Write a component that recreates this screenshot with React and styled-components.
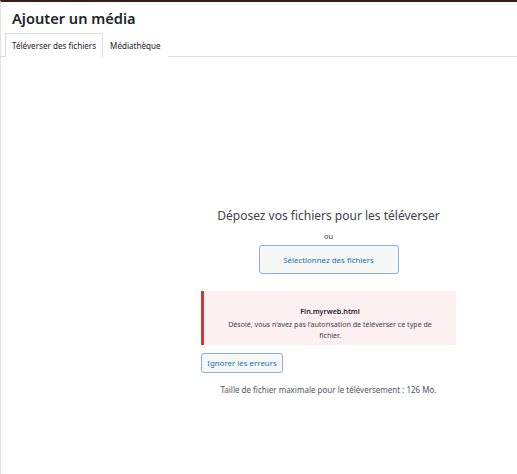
import React from "react";
import styled, { createGlobalStyle } from "styled-components";

const Global = createGlobalStyle`
  html, body { margin: 0; padding: 0; background: #fff; }
  body { font-family: "Noto Sans", "Open Sans", sans-serif; color: #3c434a; }
  * { box-sizing: border-box; }
`;

const Frame = styled.div`
  width: 517px;
  height: 474px;
  border-top: 2px solid #3b1c16;
  border-left: 1px solid #e2e2e4;
  overflow: hidden;
  display: flex;
  flex-direction: column;
  background: #fff;
`;

const Title = styled.h1`
  margin: 6px 0 0 11px;
  font-size: 14.6px;
  line-height: 20px;
  font-weight: 600;
  color: #1d2327;
`;

const TabBar = styled.div`
  display: flex;
  margin-top: 5px;
  padding: 0 4px;
  border-bottom: 1px solid #dcdcde;
  height: 24px;
`;

const Tab = styled.div`
  display: flex;
  align-items: center;
  height: 24px;
  padding: 0 6px;
  font-size: 8.1px;
  color: #1d2327;
  background: #fff;
  border: 1px solid ${(p) => (p.$active ? "#dcdcde" : "transparent")};
  border-bottom: none;
  margin-bottom: -1px;
`;

const Content = styled.div`
  flex: 1;
  display: flex;
  flex-direction: column;
  align-items: center;
  padding-left: 139px;
`;

const DropTitle = styled.h2`
  margin: 150px 0 0;
  font-size: 12px;
  line-height: 18px;
  font-weight: 400;
  color: #3c434a;
`;

const Or = styled.p`
  margin: 5px 0 0;
  font-size: 7.5px;
  line-height: 12px;
  color: #3c434a;
`;

const Button = styled.button`
  font-family: inherit;
  font-size: 7.9px;
  color: #2271b1;
  background: #f6f7f7;
  border: 1px solid #86b1d9;
  border-radius: 3px;
  cursor: pointer;
  padding: 0;
  width: ${(p) => p.$w}px;
  height: ${(p) => p.$h}px;
`;

const SelectButton = styled(Button)`
  margin-top: 3px;
`;

const Column = styled.div`
  width: 255px;
  display: flex;
  flex-direction: column;
  align-items: flex-start;
  margin-top: 17px;
`;

const ErrorBox = styled.div`
  width: 100%;
  background: #fcf0f1;
  border-left: 3px solid #d63638;
  padding: 15px 18px 3px 18px;
  text-align: center;
  height: 54px;
`;

const FileName = styled.div`
  font-size: 7.2px;
  line-height: 11px;
  font-weight: 600;
  color: #1d2327;
  margin-bottom: 2px;
`;

const Message = styled.div`
  font-size: 7.1px;
  line-height: 11px;
  color: #3c434a;
`;

const IgnoreButton = styled(Button)`
  margin-top: 8px;
`;

const MaxSize = styled.p`
  margin: 11px 0 0;
  font-size: 8px;
  line-height: 12px;
  color: #50575e;
`;

export default function App() {
  return (
    <>
      <Global />
      <Frame>
        <Title>Ajouter un média</Title>
        <TabBar>
          <Tab $active>Téléverser des fichiers</Tab>
          <Tab>Médiathèque</Tab>
        </TabBar>
        <Content>
          <DropTitle>Déposez vos fichiers pour les téléverser</DropTitle>
          <Or>ou</Or>
          <SelectButton $w={140} $h={29}>Sélectionnez des fichiers</SelectButton>
          <Column>
            <ErrorBox>
              <FileName>Fin.myrweb.html</FileName>
              <Message>Désolé, vous n’avez pas l’autorisation de téléverser ce type de fichier.</Message>
            </ErrorBox>
            <IgnoreButton $w={82} $h={20}>Ignorer les erreurs</IgnoreButton>
          </Column>
          <MaxSize>Taille de fichier maximale pour le téléversement : 126 Mo.</MaxSize>
        </Content>
      </Frame>
    </>
  );
}
